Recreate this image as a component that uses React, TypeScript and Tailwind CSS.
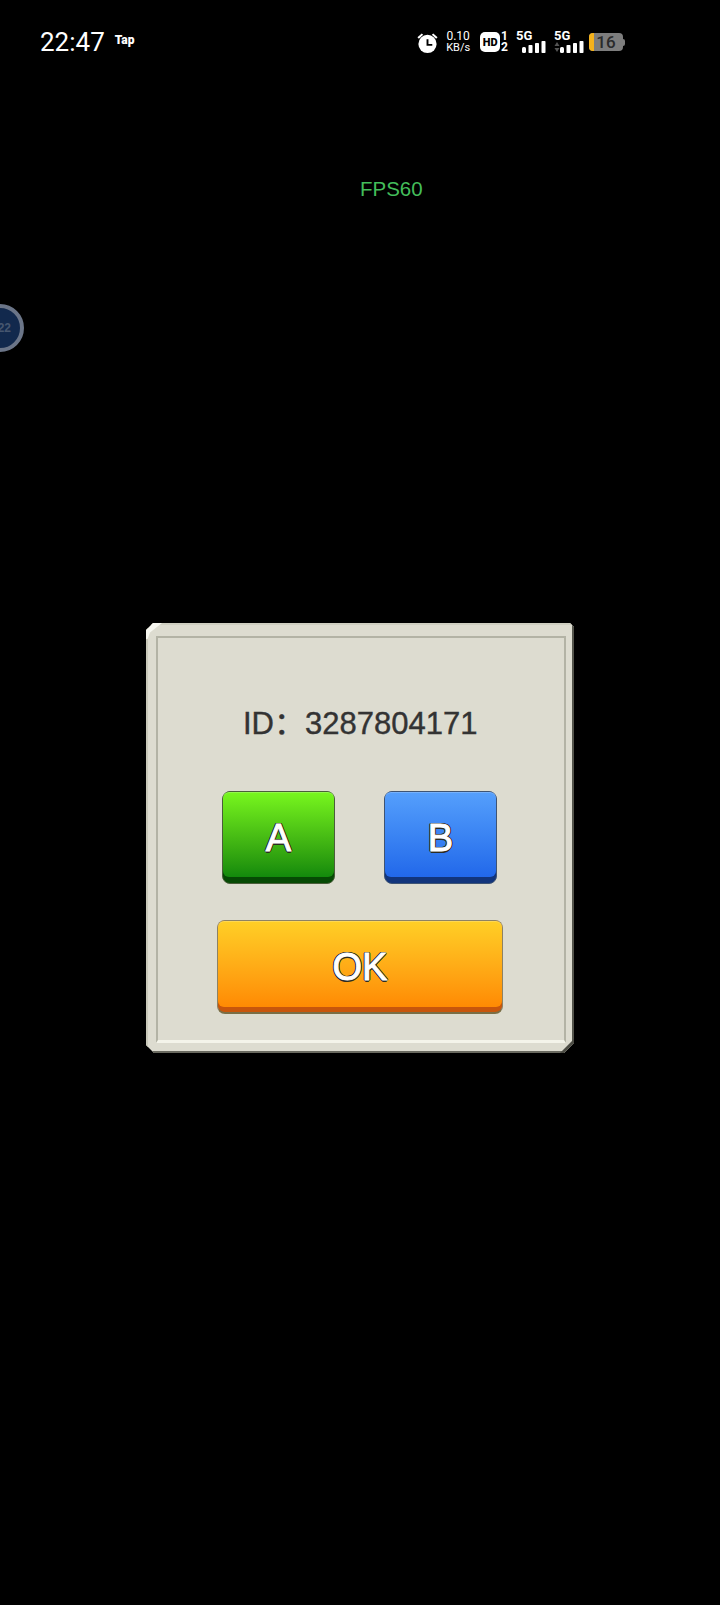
import * as React from 'react';

const Outlined = ({ children }: { children: React.ReactNode }) => (
  <span className="font-['Liberation_Sans',sans-serif] text-white text-[38px] leading-none [-webkit-text-stroke:1px_#fff] [text-shadow:1.5px_0_0_#2c2c22,-1.5px_0_0_#2c2c22,0_1.5px_0_#2c2c22,0_-1.5px_0_#2c2c22,1px_1px_0_#2c2c22,-1px_1px_0_#2c2c22,1px_-1px_0_#2c2c22,-1px_-1px_0_#2c2c22]">
    {children}
  </span>
);

const Bars = () => (
  <svg width="24" height="12" viewBox="0 0 24 12" fill="#fff">
    <rect x="0" y="6" width="4" height="6" rx="1.5" />
    <rect x="6.5" y="4" width="4" height="8" rx="0.8" />
    <rect x="13" y="2" width="4" height="10" rx="0.8" />
    <rect x="19.5" y="0" width="4" height="12" rx="0.8" />
  </svg>
);

const Arrows = () => (
  <svg width="6" height="12" viewBox="0 0 6 12" fill="#555">
    <path d="M3 1 5.5 5h-5ZM3 11 .5 7h5Z" />
  </svg>
);

const StatusBar = () => (
  <div className="flex items-center justify-between h-[84px] pl-10 pr-[95px] text-white font-['Roboto',sans-serif]">
    <div className="flex items-center gap-[10px]">
      <span className="text-[26px] leading-none">22:47</span>
      <span className="text-[12px] font-black leading-none mb-1">Tap</span>
    </div>
    <div className="flex items-center">
      <svg width="23" height="23" viewBox="0 0 24 24" fill="#fff" className="mr-[7px]">
        <circle cx="12" cy="13.5" r="9.5" />
        <path d="M1.5 6.5 6 2.5 7.5 4 3 8ZM22.5 6.5 18 2.5 16.5 4 21 8Z" />
        <path d="M11 8.5h2v5h4v2h-6Z" fill="#000" />
      </svg>
      <div className="flex flex-col items-center text-[11px] leading-[11px] mr-[10px]">
        <span className="text-[12px]">0.10</span>
        <span>KB/s</span>
      </div>
      <div className="flex items-center h-[20px] w-[20px] rounded-[5px] bg-white justify-center mr-[1px]">
        <span className="text-black text-[11px] font-black leading-none">HD</span>
      </div>
      <div className="flex flex-col items-center text-[12px] font-bold leading-[11px] mr-[8px]">
        <span>1</span>
        <span>2</span>
      </div>
      <div className="flex flex-col items-start w-[30px] mr-[8px]">
        <span className="text-[13px] font-bold leading-[10px] -mt-[1px]">5G</span>
        <div className="flex justify-end w-full"><Bars /></div>
      </div>
      <div className="flex flex-col items-start w-[30px] mr-[5px]">
        <span className="text-[13px] font-bold leading-[10px] -mt-[1px]">5G</span>
        <div className="flex justify-between w-full"><Arrows /><Bars /></div>
      </div>
      <div className="flex items-center">
        <div className="relative w-[34px] h-[18px] rounded-[4px] bg-[#7d7d7d] overflow-hidden flex items-center justify-center">
          <div className="absolute left-0 top-0 bottom-0 w-[5px] bg-[#f5b21c]" />
          <span className="relative text-[#2a2a2a] text-[17px] font-medium leading-none">16</span>
        </div>
        <div className="w-[2px] h-[7px] bg-[#7d7d7d] rounded-r-sm" />
      </div>
    </div>
  </div>
);

const App = () => (
  <div className="relative w-[720px] h-[1605px] bg-black overflow-hidden flex flex-col items-center font-['Liberation_Sans',sans-serif]">
    <div className="w-full"><StatusBar /></div>

    <div className="w-full pl-[360px] mt-[93px] text-[#43bd5a] text-[20.5px] leading-6">FPS60</div>

    {/* floating ball, cut off by the left edge */}
    <div className="absolute left-[-24px] top-[304px] w-[48px] h-[48px] rounded-full border-[4px] border-[#6b7588] bg-[#12294d] flex items-center justify-end pr-[9px]">
      <span className="text-[#46566f] text-[12px] font-bold">22</span>
    </div>

    <div className="mt-[422px] w-[428px] h-[430px] bg-[#dddcd0] border-[2px] border-t-[#cfcfc1] border-l-[#c9c9ba] border-r-[#55554c] border-b-[#6a6a60] pt-[11px] pl-[8px] pr-[6px] pb-[8px] relative [clip-path:polygon(7px_0,calc(100%-4px)_0,100%_4px,100%_calc(100%-10px),calc(100%-10px)_100%,8px_100%,0_calc(100%-8px),0_7px)]">
      <div className="absolute -left-[2px] -top-[2px] w-[16px] h-[16px] bg-[#f7f7f0] [clip-path:polygon(0_45%,45%_0,100%_0,25%_60%,10%_100%,0_100%)]" />
      <div className="absolute -right-[2px] -bottom-[2px] w-[14px] h-[14px] bg-[#4c4c44] [clip-path:polygon(100%_0,100%_30%,30%_100%,0_100%)]" />
      <div className="h-full border-[2px] border-[#b3b3a5] border-b-[3px] border-b-[#f4f4ea] flex flex-col items-center">
        <div className="mt-[68px] text-[#333333] text-[31px] leading-9 w-full pl-[85px] font-['Liberation_Sans','Noto_Sans_CJK_SC',sans-serif] [-webkit-text-stroke:0.4px_#333333]">ID：3287804171</div>
        <div className="mt-[49px] flex w-full pl-[64px] gap-[49px]">
          <button className="w-[113px] h-[93px] rounded-[8px] border border-[#4a5e3a] bg-[#064a04] pb-[6px]">
            <div className="h-full rounded-[6px] bg-gradient-to-b from-[#78f71e] to-[#128a0c] shadow-[inset_0_1px_0_rgba(255,255,255,0.2)] flex items-center justify-center pt-[7px]">
              <Outlined>A</Outlined>
            </div>
          </button>
          <button className="w-[113px] h-[93px] rounded-[8px] border border-[#3e5474] bg-[#12357c] pb-[6px]">
            <div className="h-full rounded-[6px] bg-gradient-to-b from-[#559ffc] to-[#2268ea] shadow-[inset_0_1px_0_rgba(255,255,255,0.2)] flex items-center justify-center pt-[7px]">
              <Outlined>B</Outlined>
            </div>
          </button>
        </div>
        <button className="mt-[36px] self-start ml-[59px] w-[286px] h-[94px] rounded-[8px] border border-[#8d8264] border-b-[2px] border-b-[#7a6e45] bg-[#c8560c] pb-[5px]">
          <div className="h-full rounded-[6px] bg-gradient-to-b from-[#ffcf26] to-[#ff8a03] shadow-[inset_0_1px_0_rgba(255,255,255,0.2)] flex items-center justify-center pt-[6px]">
            <Outlined>OK</Outlined>
          </div>
        </button>
      </div>
    </div>
  </div>
);

export default App;
